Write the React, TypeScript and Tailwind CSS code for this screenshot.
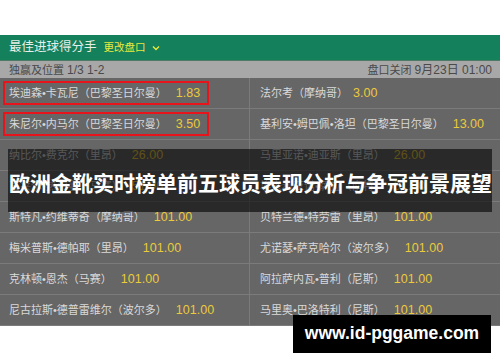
const rows: { left: Entry; right: Entry }[] = [
    {
        left: { name: '埃迪森•卡瓦尼（巴黎圣日尔曼）', odds: '1.83', boxed: true },
        right: { name: '法尔考（摩纳哥）', odds: '3.00', gap: 'ml-[5px]' },
    },
    {
        left: { name: '朱尼尔•内马尔（巴黎圣日尔曼）', odds: '3.50', boxed: true },
        right: { name: '基利安•姆巴佩•洛坦（巴黎圣日尔曼）', odds: '13.00' },
    },
    {
        left: { name: '纳比尔•费克尔（里昂）', odds: '26.00' },
        right: { name: '马里亚诺•迪亚斯（里昂）', odds: '26.00' },
    },
    {
        left: { name: '瓦莱尔•热尔曼（马赛）', odds: '51.00' },
        right: { name: '埃米利亚诺•萨拉（南特）', odds: '51.00' },
    },
    {
        left: { name: '斯特凡•约维蒂奇（摩纳哥）', odds: '101.00' },
        right: { name: '贝特兰德•特劳雷（里昂）', odds: '101.00' },
    },
    {
        left: { name: '梅米普斯•德帕耶（里昂）', odds: '101.00' },
        right: { name: '尤诺瑟•萨克哈尔（波尔多）', odds: '101.00' },
    },
    {
        left: { name: '克林顿•恩杰（马赛）', odds: '101.00' },
        right: { name: '阿拉萨内瓦•普利（尼斯）', odds: '101.00' },
    },
    {
        left: { name: '尼古拉斯•德普雷维尔（波尔多）', odds: '101.00' },
        right: { name: '马里奥•巴洛特利（尼斯）', odds: '101.00' },
    },
];

type Entry = { name: string; odds: string; boxed?: boolean; gap?: string };

function Cell({ entry }: { entry: Entry }) {
    const content = (
        <>
            <span className="text-[#d9d9d9] text-[11px]">{entry.name}</span>
            <span className={`${entry.gap ?? 'ml-[9px]'} text-[#ecca3a] text-[12.5px]`}>{entry.odds}</span>
        </>
    );

    if (entry.boxed) {
        return (
            <div className="ml-[3px] w-[206px] h-[24px] border-2 border-[#e8141b] flex items-center pl-[4px]">
                {content}
            </div>
        );
    }
    return <div className="pl-[9px] flex items-center">{content}</div>;
}

export default function App() {
    return (
        <div className="relative w-[500px] h-[362px] bg-white overflow-hidden font-['Liberation_Sans','Noto_Sans_CJK_SC',sans-serif]">
            <div className="h-[35px]" />

            {/* Green title bar */}
            <div className="h-[26px] bg-[#15805c] flex items-center pl-[9px] border-b border-[#4f7a66]">
                <span className="text-[#e6efe9] text-[12.5px]">最佳进球得分手</span>
                <span className="ml-[7px] text-[#e9e93c] text-[10.5px]">更改盘口</span>
                <svg className="ml-[6px] mt-[1px]" width="8" height="6" viewBox="0 0 8 6">
                    <polyline points="1,1.5 4,4.5 7,1.5" fill="none" stroke="#e9e93c" strokeWidth="1.4" />
                </svg>
            </div>

            {/* Gray info bar */}
            <div className="h-[17px] bg-[#a8a8a8] flex items-center justify-between pl-[9px] pr-[8px] text-[#4a4a4a] text-[11px]">
                <span>独赢及位置 <span className="text-[12px]">1/3 1-2</span></span>
                <span>盘口关闭 <span className="text-[12px]">9月23日 01:00</span></span>
            </div>

            {/* Odds table */}
            <div className="bg-[#666666]">
                {rows.map((row, i) => (
                    <div key={i} className="flex h-[31px] border-b border-[#7b7b7b]">
                        <div className="w-[250px] border-r border-[#7b7b7b] flex items-center">
                            <Cell entry={row.left} />
                        </div>
                        <div className="w-[250px] flex items-center pl-[1px]">
                            <Cell entry={row.right} />
                        </div>
                    </div>
                ))}
            </div>

            {/* Headline banner */}
            <div className="absolute left-[8px] top-[149px] w-[484px] h-[63px] bg-black/60 flex items-center pl-[1px] pt-[4px]">
                <span className="text-white font-bold text-[21px] leading-none whitespace-nowrap font-['Noto_Sans_CJK_SC',sans-serif]">
                    欧洲金靴实时榜单前五球员表现分析与争冠前景展望
                </span>
            </div>

            {/* Watermark */}
            <div className="absolute left-[293px] top-[315px] w-[198px] h-[38px] bg-black flex items-center justify-center">
                <span className="text-white font-bold text-[17.5px] leading-none">www.id-pggame.com</span>
            </div>
        </div>
    );
}
